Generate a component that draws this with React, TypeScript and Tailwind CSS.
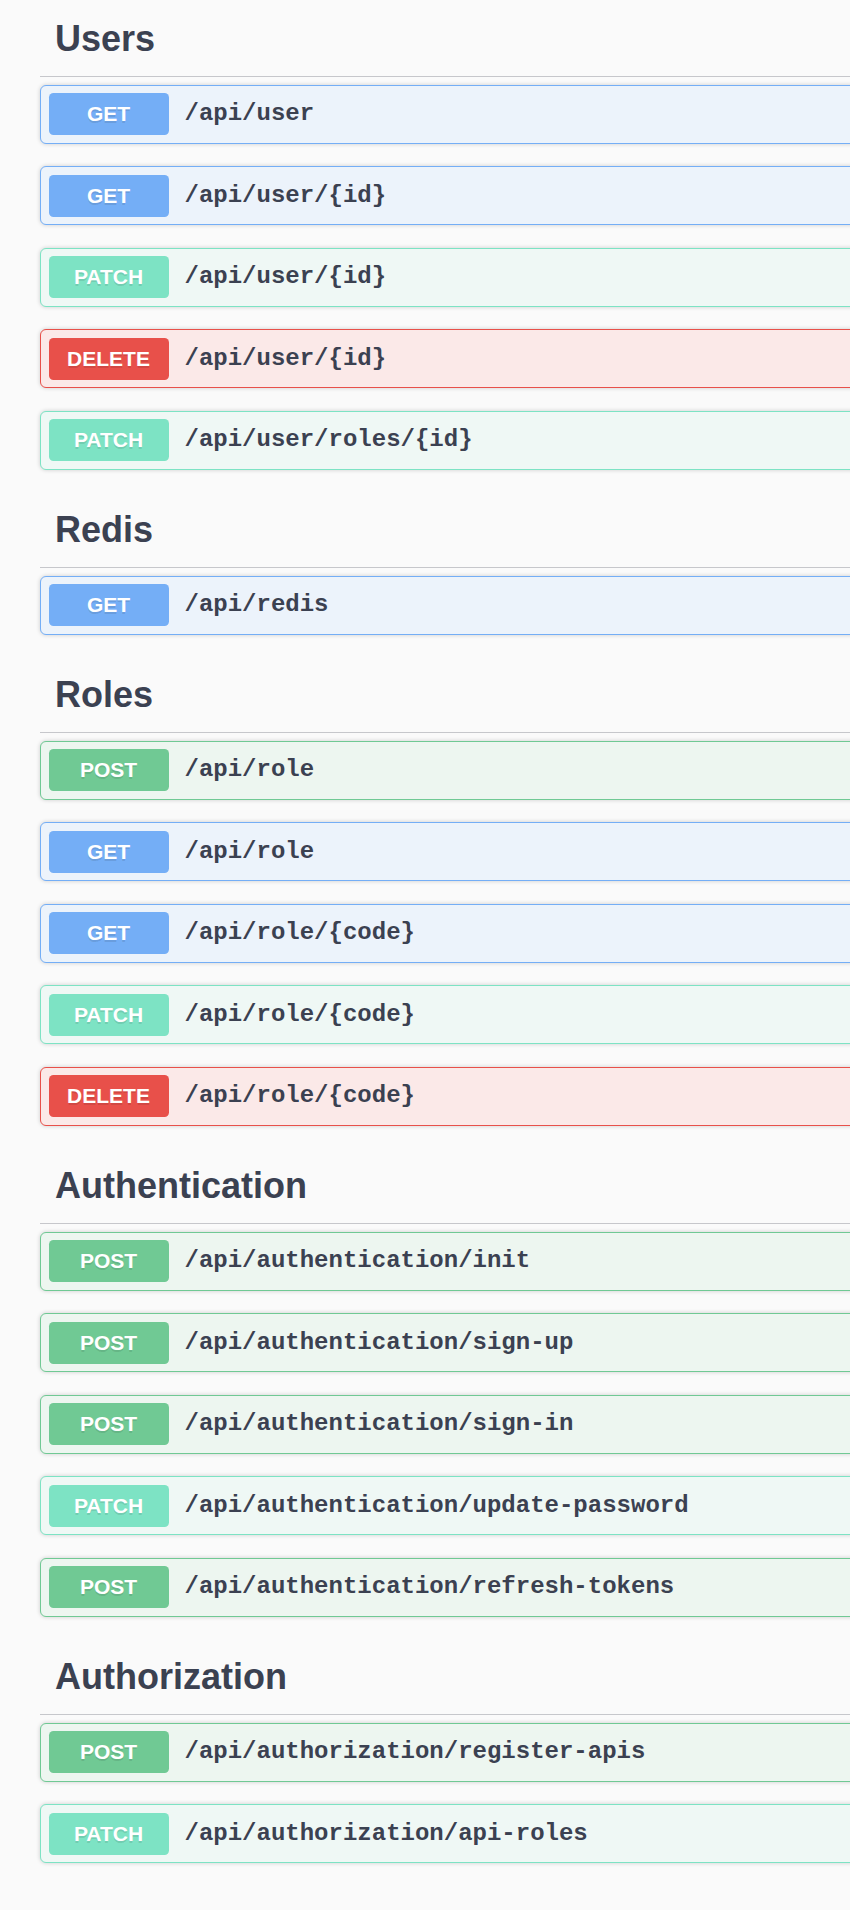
import React from 'react';

type Method = 'GET' | 'POST' | 'PATCH' | 'DELETE';

interface Endpoint {
  method: Method;
  path: string;
}

interface Section {
  name: string;
  endpoints: Endpoint[];
}

const sections: Section[] = [
  {
    name: 'Users',
    endpoints: [
      { method: 'GET', path: '/api/user' },
      { method: 'GET', path: '/api/user/{id}' },
      { method: 'PATCH', path: '/api/user/{id}' },
      { method: 'DELETE', path: '/api/user/{id}' },
      { method: 'PATCH', path: '/api/user/roles/{id}' },
    ],
  },
  {
    name: 'Redis',
    endpoints: [{ method: 'GET', path: '/api/redis' }],
  },
  {
    name: 'Roles',
    endpoints: [
      { method: 'POST', path: '/api/role' },
      { method: 'GET', path: '/api/role' },
      { method: 'GET', path: '/api/role/{code}' },
      { method: 'PATCH', path: '/api/role/{code}' },
      { method: 'DELETE', path: '/api/role/{code}' },
    ],
  },
  {
    name: 'Authentication',
    endpoints: [
      { method: 'POST', path: '/api/authentication/init' },
      { method: 'POST', path: '/api/authentication/sign-up' },
      { method: 'POST', path: '/api/authentication/sign-in' },
      { method: 'PATCH', path: '/api/authentication/update-password' },
      { method: 'POST', path: '/api/authentication/refresh-tokens' },
    ],
  },
  {
    name: 'Authorization',
    endpoints: [
      { method: 'POST', path: '/api/authorization/register-apis' },
      { method: 'PATCH', path: '/api/authorization/api-roles' },
    ],
  },
];

// row border + background, badge colour
const styles: Record<Method, { row: string; badge: string }> = {
  GET: { row: 'border-[#74aef6] bg-[#ecf3fb]', badge: 'bg-[#74aef6]' },
  POST: { row: 'border-[#70c994] bg-[#edf6f0]', badge: 'bg-[#70c994]' },
  PATCH: { row: 'border-[#7de3c4] bg-[#eff8f5]', badge: 'bg-[#7de3c4]' },
  DELETE: { row: 'border-[#e8504a] bg-[#fbe9e8]', badge: 'bg-[#e8504a]' },
};

const EndpointRow: React.FC<{ endpoint: Endpoint }> = ({ endpoint }) => {
  const s = styles[endpoint.method];
  return (
    <div
      className={`flex items-center gap-[16px] mb-[22.5px] p-[7.5px] border rounded-[6px] shadow-[0_0_4px_rgba(0,0,0,0.19)] ${s.row}`}
    >
      <span
        className={`w-[120px] h-[42px] flex items-center justify-center rounded-[4.5px] text-white text-[21px] font-bold [text-shadow:0_1.5px_0_rgba(0,0,0,0.1)] ${s.badge}`}
        style={{ fontFamily: '"Liberation Sans", Arial, sans-serif' }}
      >
        {endpoint.method}
      </span>
      <span
        className="text-[24px] font-bold text-[#3b4151]"
        style={{ fontFamily: '"Liberation Mono", "Courier New", monospace' }}
      >
        {endpoint.path}
      </span>
    </div>
  );
};

export default function App() {
  return (
    <div className="w-full min-h-[1910px] bg-[#fafafa] overflow-hidden">
      <div className="w-[1000px] pl-[40px] pt-[1px]">
        {sections.map((section) => (
          <div key={section.name}>
            <h3
              className="pt-[15px] pb-[15px] pl-[15px] mb-[7.5px] border-b border-[#c6c7cb] text-[36px] leading-[45px] font-bold text-[#3b4151]"
              style={{ fontFamily: '"Liberation Sans", Arial, sans-serif' }}
            >
              {section.name}
            </h3>
            {section.endpoints.map((ep, i) => (
              <EndpointRow key={i} endpoint={ep} />
            ))}
          </div>
        ))}
      </div>
    </div>
  );
}
